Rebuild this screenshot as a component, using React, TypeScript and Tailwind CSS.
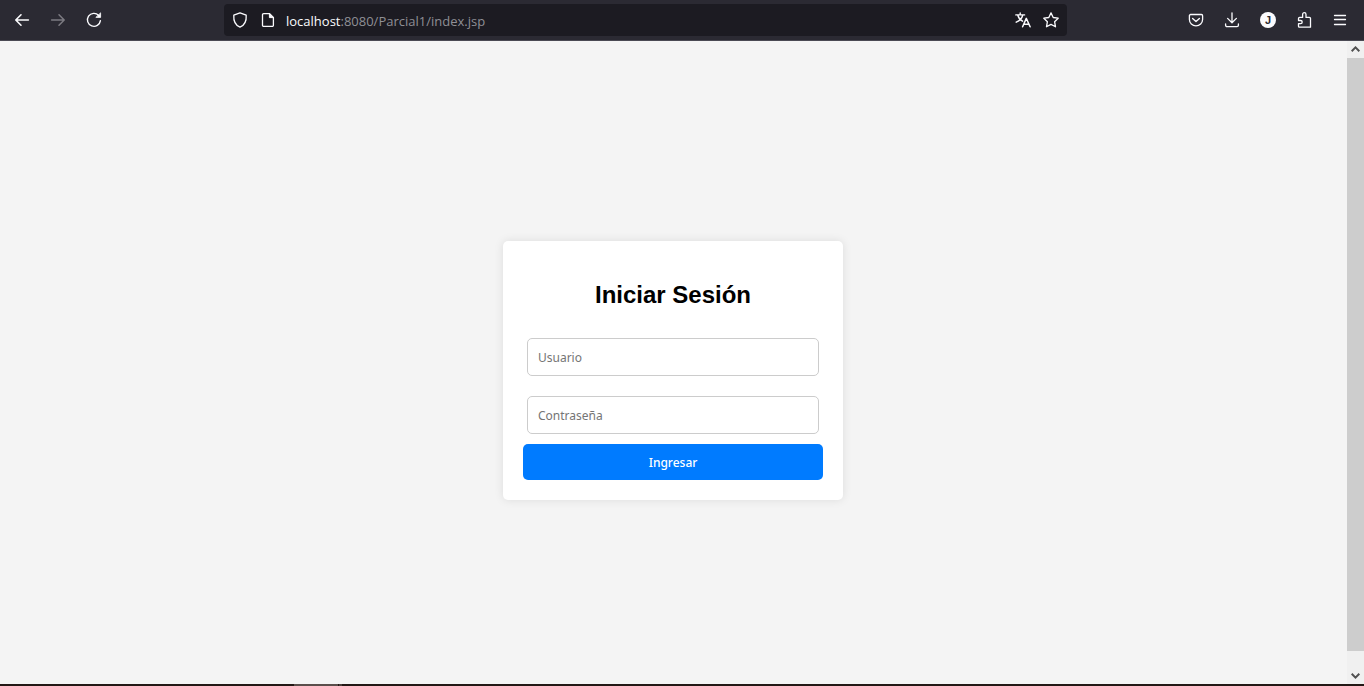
import type { ReactNode } from "react";

function Icon({ children, className = "" }: { children: ReactNode; className?: string }) {
  return (
    <svg
      viewBox="0 0 16 16"
      className={`size-4 shrink-0 ${className}`}
      fill="none"
      stroke="currentColor"
      strokeWidth="1.3"
      strokeLinecap="round"
      strokeLinejoin="round"
      aria-hidden="true"
    >
      {children}
    </svg>
  );
}

function ToolButton({ label, children, disabled }: { label: string; children: ReactNode; disabled?: boolean }) {
  return (
    <button
      type="button"
      aria-label={label}
      disabled={disabled}
      className="flex h-8 w-9 items-center justify-center text-[#fbfbfe] disabled:text-[#7c7b82]"
    >
      {children}
    </button>
  );
}

function BarButton({ label, children }: { label: string; children: ReactNode }) {
  return (
    <button type="button" aria-label={label} className="flex h-8 w-7 items-center justify-center text-[#fbfbfe]">
      {children}
    </button>
  );
}

function Toolbar() {
  return (
    <header className="flex h-[41px] shrink-0 items-center border-b border-[#4a4953] bg-[#2b2a33] pr-1.5 pl-1">
      <nav className="flex">
        <ToolButton label="Atrás">
          <Icon>
            <path d="M14.4 8H2M7 2.8 1.8 8 7 13.2" strokeWidth="1.6" />
          </Icon>
        </ToolButton>
        <ToolButton label="Adelante" disabled>
          <Icon>
            <path d="M1.6 8H14M9 2.8 14.2 8 9 13.2" strokeWidth="1.5" />
          </Icon>
        </ToolButton>
        <ToolButton label="Recargar">
          <Icon>
            <path d="M12.7 3.4A6.5 6.5 0 1 0 14.4 8.6" strokeWidth="1.4" />
            <path d="M14.6 1.2V5.4H10.2Z" fill="currentColor" strokeWidth="0.8" />
          </Icon>
        </ToolButton>
      </nav>

      <div className="mr-[111px] ml-28 flex h-8 min-w-0 flex-1 items-center rounded bg-[#1c1b22] px-0.5">
        <BarButton label="Protección">
          <Icon>
            <path d="M8 .8 14.2 3.2C14.6 8.6 12.5 13.2 8 15.2 3.5 13.2 1.4 8.6 1.8 3.2Z" />
          </Icon>
        </BarButton>
        <BarButton label="Información del sitio">
          <Icon>
            <path d="M3.7 1.6H9.6L13.4 5.4V13.2A1.2 1.2 0 0 1 12.2 14.4H3.7A1.2 1.2 0 0 1 2.5 13.2V2.8A1.2 1.2 0 0 1 3.7 1.6Z" />
            <path d="M9.4 1.8V5.6H13.2Z" fill="currentColor" strokeWidth="1" />
          </Icon>
        </BarButton>
        <p className="ml-1 min-w-0 flex-1 truncate pt-0.5 font-['Open_Sans','Noto_Sans',sans-serif] text-[13px] leading-5 text-[#8f8f95]">
          <span className="text-[#fbfbfe]">localhost</span>:8080/Parcial1/index.jsp
        </p>
        <BarButton label="Traducir">
          <Icon>
            <path d="M.8 2.9H9.6M5.2 1V2.8M7.8 3C7 6.4 4.3 8.8 1.2 10.2M2.8 3.2C3.6 6 5.4 8 7.6 9.2" strokeWidth="1.4" />
            <path d="M7.6 14.8 11.3 6.4 15.1 14.8M8.9 12.2H13.8" strokeWidth="1.5" />
          </Icon>
        </BarButton>
        <BarButton label="Marcador">
          <Icon>
            <path d="M8 .9 10.2 5.5 15.2 6.2 11.6 9.7 12.5 14.8 8 12.4 3.5 14.8 4.4 9.7 .8 6.2 5.8 5.5Z" />
          </Icon>
        </BarButton>
      </div>

      <div className="flex">
        <ToolButton label="Pocket">
          <Icon>
            <path d="M2.6 2.5H13.4A1.2 1.2 0 0 1 14.6 3.7V7.5A6.6 6.3 0 0 1 1.4 7.5V3.7A1.2 1.2 0 0 1 2.6 2.5Z" />
            <path d="M4.6 6.4 8 9.5 11.4 6.4" strokeWidth="1.4" />
          </Icon>
        </ToolButton>
        <ToolButton label="Descargas">
          <Icon>
            <path d="M8 .8V10.6M3.6 6.4 8 10.8 12.4 6.4M1.6 12V13.2A1.4 1.4 0 0 0 3 14.6H13A1.4 1.4 0 0 0 14.4 13.2V12" />
          </Icon>
        </ToolButton>
        <ToolButton label="Cuenta">
          <span className="flex size-4 items-center justify-center rounded-full bg-[#fbfbfe] font-['Liberation_Sans',Arial,sans-serif] text-[11px] leading-4 font-bold text-[#2b2a33]">
            J
          </span>
        </ToolButton>
        <ToolButton label="Extensiones">
          <Icon>
            <path d="M3.6 5.4H6.6V2.4A1.7 1.7 0 0 1 10 2.4V5.4H13.4A1.1 1.1 0 0 1 14.5 6.5V15.2H3.4A.9 .9 0 0 1 2.5 14.3V11.7H4.6A1.6 1.6 0 0 0 4.6 8.5H2.5V6.5A1.1 1.1 0 0 1 3.6 5.4Z" />
          </Icon>
        </ToolButton>
        <ToolButton label="Menú">
          <Icon>
            <path d="M2.5 3.5H13.5M2.5 7.5H13.5M2.5 12.5H13.5" strokeWidth="1.3" />
          </Icon>
        </ToolButton>
      </div>
    </header>
  );
}

function ScrollBar() {
  return (
    <aside aria-hidden="true" className="flex w-[17px] shrink-0 flex-col bg-[#f0f0f0] text-[#505050]">
      <div className="flex h-[17px] items-center justify-center">
        <svg viewBox="0 0 10 8" className="h-2 w-2.5" fill="none" stroke="currentColor" strokeWidth="2">
          <path d="M.7 5.2 4.5 1.4 8.3 5.2" />
        </svg>
      </div>
      <div className="mb-4 flex-1 bg-[#cdcdcd]" />
      <div className="flex h-[17px] items-center justify-center">
        <svg viewBox="0 0 10 8" className="h-2 w-2.5" fill="none" stroke="currentColor" strokeWidth="2">
          <path d="M.7 1.8 4.5 5.6 8.3 1.8" />
        </svg>
      </div>
    </aside>
  );
}

const fieldClass =
  "mx-1 my-2.5 h-[38px] rounded-[5px] border border-[#cccccc] bg-white px-2.5 font-['Noto_Sans',sans-serif] text-xs text-black placeholder:text-[#757575]";

function LoginForm() {
  return (
    <form
      onSubmit={(event) => event.preventDefault()}
      className="flex w-[340px] flex-col rounded-[5px] bg-white p-5 shadow-[0_0_10px_rgba(0,0,0,0.1)]"
    >
      <h2 className="my-5 text-center font-['Liberation_Sans',Arial,sans-serif] text-2xl leading-[27px] font-bold text-black">
        Iniciar Sesión
      </h2>
      <input type="text" name="usuario" aria-label="Usuario" placeholder="Usuario" className={fieldClass} />
      <input type="password" name="contrasena" aria-label="Contraseña" placeholder="Contraseña" className={fieldClass} />
      <button
        type="submit"
        className="h-9 rounded-[5px] bg-[#007bff] pt-0.5 font-['Noto_Sans',sans-serif] text-xs font-medium text-white"
      >
        Ingresar
      </button>
    </form>
  );
}

export default function App() {
  return (
    <div className="flex h-screen flex-col bg-[#f4f4f4]">
      <Toolbar />
      <div className="flex min-h-0 flex-1">
        <main className="flex flex-1 items-center justify-center pt-4 pr-px">
          <LoginForm />
        </main>
        <ScrollBar />
      </div>
      <footer className="flex h-0.5 shrink-0 bg-[#231815]">
        <div className="ml-[294px] w-11 bg-[#5a4e4b]" />
        <div className="ml-px w-[3px] bg-[#4a3e3b]" />
      </footer>
    </div>
  );
}
